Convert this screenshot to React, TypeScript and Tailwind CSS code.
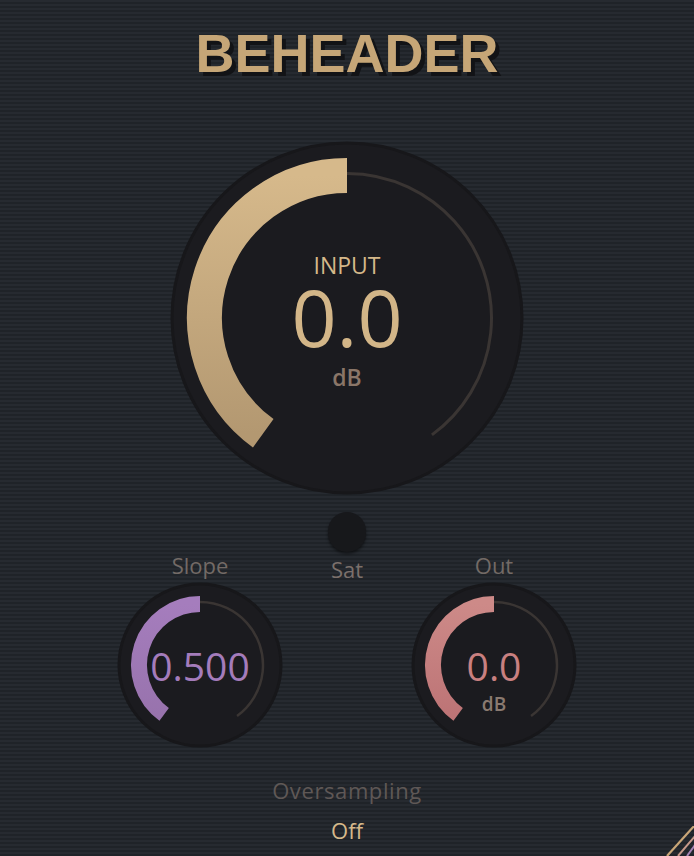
import React from "react";

function pt(cx: number, cy: number, r: number, deg: number) {
  const a = (deg * Math.PI) / 180;
  return [cx + r * Math.sin(a), cy - r * Math.cos(a)];
}
function arc(cx: number, cy: number, r: number, a0: number, a1: number) {
  const [x0, y0] = pt(cx, cy, r, a0);
  const [x1, y1] = pt(cx, cy, r, a1);
  const large = Math.abs(a1 - a0) > 180 ? 1 : 0;
  return `M ${x0.toFixed(2)} ${y0.toFixed(2)} A ${r} ${r} 0 ${large} 1 ${x1.toFixed(2)} ${y1.toFixed(2)}`;
}

function KnobSvg({
  size,
  valR,
  valW,
  trackR,
  trackW,
  c1,
  c2,
  id,
}: {
  size: number;
  valR: number;
  valW: number;
  trackR: number;
  trackW: number;
  c1: string;
  c2: string;
  id: string;
}) {
  const c = size / 2;
  return (
    <svg width={size} height={size} viewBox={`0 0 ${size} ${size}`} className="absolute inset-0">
      <defs>
        <linearGradient id={id} x1="0" y1="0" x2="0" y2="1">
          <stop offset="0" stopColor={c1} />
          <stop offset="1" stopColor={c2} />
        </linearGradient>
      </defs>
      <circle cx={c} cy={c} r={c - 2} fill="#1b1b1f" stroke="#17171a" strokeWidth={3} />
      <path d={arc(c, c, trackR, -144, 144)} fill="none" stroke="#3a3533" strokeWidth={trackW} />
      <path d={arc(c, c, valR, -144, 0)} fill="none" stroke={`url(#${id})`} strokeWidth={valW} />
    </svg>
  );
}

export default function App() {
  return (
    <div
      className="relative w-full min-h-[856px] overflow-hidden flex flex-col items-center bg-[repeating-linear-gradient(to_bottom,#262a30_0px,#262a30_2px,#1f2328_2px,#1f2328_4px)]"
      style={{ fontFamily: '"Open Sans", "Noto Sans", sans-serif' }}
    >
      <h1
        className="mt-[26px] text-[54px] leading-[54px] font-bold text-[#c6a677] [text-shadow:4px_4px_0_#121316]"
        style={{ fontFamily: '"Liberation Sans", Arial, sans-serif' }}
      >
        BEHEADER
      </h1>

      <div className="relative mt-[61px] w-[354px] h-[354px]">
        <KnobSvg size={354} valR={142.5} valW={35} trackR={144.5} trackW={3} c1="#d6b98b" c2="#b39871" id="g1" />
        <div className="absolute inset-0 flex flex-col items-center pt-[112px]">
          <div className="text-[23px] leading-[24px] text-[#d5b889]">INPUT</div>
          <div className="mt-[6px] text-[79px] leading-[68px] text-[#d3b688]">0.0</div>
          <div className="mt-[12px] text-[23px] leading-[28px] font-semibold text-[#8a7668]">dB</div>
        </div>
      </div>

      <div className="grid grid-cols-[166px_1fr_166px] w-[460px]">
        <div className="flex flex-col items-center pt-[56px]">
          <div className="text-[22px] leading-[28px] text-[#736a66]">Slope</div>
          <div className="relative mt-[3px] w-[166px] h-[166px]">
            <KnobSvg size={166} valR={61} valW={16} trackR={63} trackW={2.5} c1="#a57dbd" c2="#9873ad" id="g2" />
            <div className="absolute inset-0 flex flex-col items-center pt-[64px]">
              <div className="text-[39px] leading-[39px] text-[#a47cbb]">0.500</div>
            </div>
          </div>
        </div>
        <div className="flex flex-col items-center pt-[17px]">
          <div className="w-[38px] h-[40px] rounded-full bg-[#17181b] shadow-[0_2px_3px_rgba(0,0,0,0.5)]" />
          <div className="mt-[3px] text-[22px] leading-[28px] font-medium text-[#7b706b]">Sat</div>
        </div>
        <div className="flex flex-col items-center pt-[56px]">
          <div className="text-[22px] leading-[28px] text-[#736a66]">Out</div>
          <div className="relative mt-[3px] w-[166px] h-[166px]">
            <KnobSvg size={166} valR={61} valW={16} trackR={63} trackW={2.5} c1="#cd8a88" c2="#bd7476" id="g3" />
            <div className="absolute inset-0 flex flex-col items-center pt-[64px]">
              <div className="text-[39px] leading-[39px] text-[#c98080]">0.0</div>
              <div className="mt-[8px] text-[19px] leading-[22px] font-semibold text-[#8a7a70]">dB</div>
            </div>
          </div>
        </div>
      </div>

      <div className="mt-[28px] text-[22px] leading-[28px] tracking-[0.6px] text-[#5f5856]">Oversampling</div>
      <div className="mt-[12px] text-[22px] leading-[28px] text-[#d6b98b]">Off</div>

      <svg width="30" height="30" viewBox="0 0 30 30" className="absolute right-0 bottom-0">
        <line x1="31" y1="-1" x2="3" y2="30" stroke="#c9a677" strokeWidth="2.2" />
        <line x1="31" y1="10" x2="14" y2="30" stroke="#c79a8a" strokeWidth="2" />
        <line x1="31" y1="19" x2="23" y2="30" stroke="#a583b4" strokeWidth="2" />
      </svg>
    </div>
  );
}
